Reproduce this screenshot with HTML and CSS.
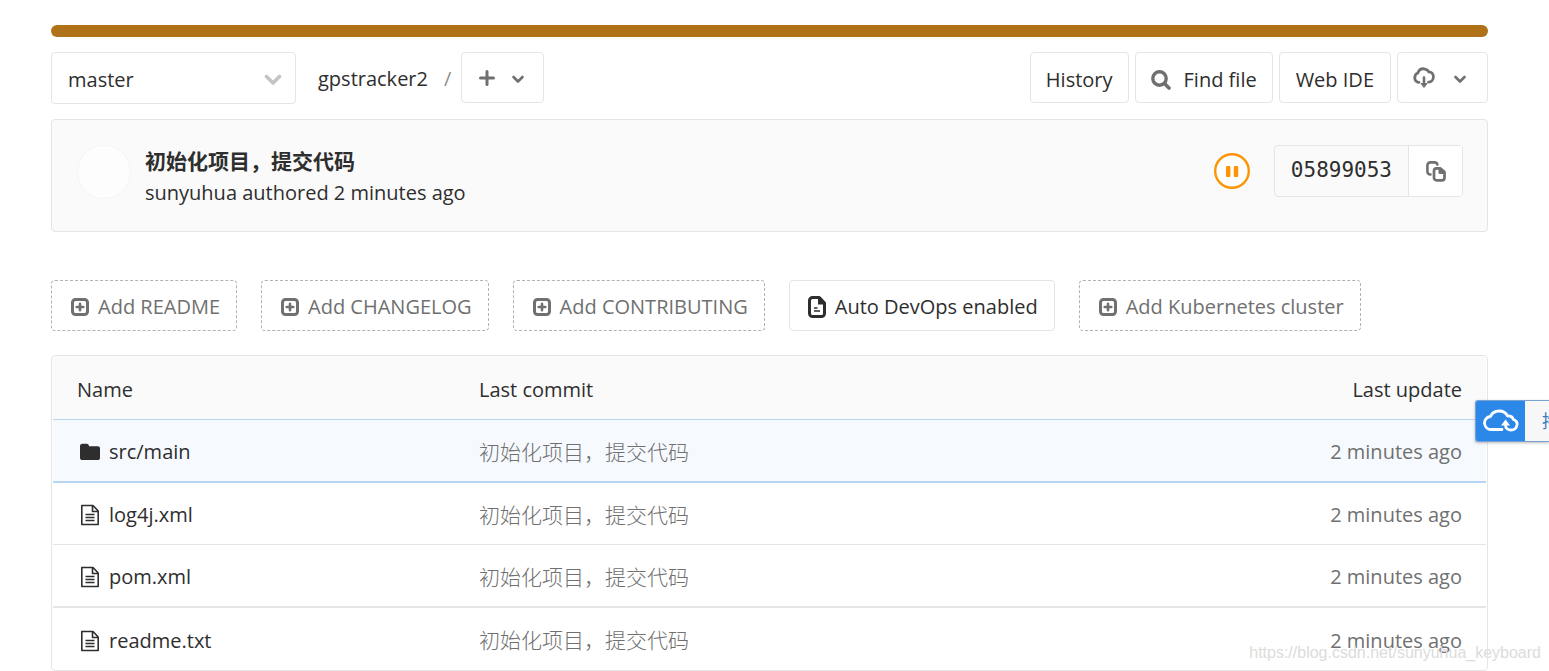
FILE: index.html
```html
<!DOCTYPE html>
<html lang="en">
<head>
<meta charset="utf-8">
<meta name="viewport" content="width=device-width, initial-scale=1">
<title>gpstracker2</title>
<link rel="stylesheet" href="styles.css">
</head>
<body>
<svg class="sprite" aria-hidden="true">
  <symbol id="chevron" viewBox="0 0 16 16"><path d="M3.500 7 8 11.500 12.500 7" fill="none" stroke="currentColor" stroke-width="2.600" stroke-linecap="round" stroke-linejoin="round"/></symbol>
  <symbol id="plus-square" viewBox="0 0 18 18"><rect x="1.500" y="1.500" width="15" height="15" rx="3" fill="none" stroke="currentColor" stroke-width="3"/><path d="M9 5.700v6.600M5.700 9h6.600" stroke="currentColor" stroke-width="2.600" stroke-linecap="round"/></symbol>
  <symbol id="file" viewBox="0 0 20 22"><path d="M1.800 1.500H13L18.200 7v13.500H1.800zM12.500 2v5.500H18" fill="none" stroke="currentColor" stroke-width="1.600" stroke-linejoin="round"/><path d="M5.500 10.500h9M5.500 13.500h9M5.500 16.500h9" stroke="currentColor" stroke-width="1.500"/></symbol>
</svg>
<main class="page">
  <div class="language-bar"></div>
  <nav class="toolbar">
    <div class="branch">
      <select class="branch-select" aria-label="Branch"><option>master</option></select>
      <svg class="branch-chevron" viewBox="0 0 18 12"><path d="M2.500 2.500 9 9l6.500-6.500" fill="none" stroke="currentColor" stroke-width="3.600" stroke-linecap="round" stroke-linejoin="round"/></svg>
    </div>
    <div class="crumbs"><a href="#">gpstracker2</a><span class="slash">/</span></div>
    <button class="btn btn-menu" aria-label="Add to tree">
      <svg class="icon-plus" viewBox="0 0 16 16"><path d="M8 1.500v13M1.500 8h13" stroke="currentColor" stroke-width="3" stroke-linecap="round"/></svg>
      <svg class="chevron"><use href="#chevron"/></svg>
    </button>
    <div class="actions">
      <a class="btn" href="#">History</a>
      <a class="btn btn-find" href="#"><svg class="icon-search" viewBox="0 0 20 20"><circle cx="8.500" cy="8.500" r="6.700" fill="none" stroke="currentColor" stroke-width="3.400"/><path d="m13.500 13.500 4.500 4.500" stroke="currentColor" stroke-width="3.600" stroke-linecap="round"/></svg>Find file</a>
      <a class="btn btn-ide" href="#">Web IDE</a>
      <button class="btn btn-download" aria-label="Download">
        <svg class="icon-cloud" viewBox="0 0 22 22"><path d="M6 15.300C3.300 15.300 1.500 13 1.800 10.300 2 8 3 6.500 4.800 6 5.800 3.200 8.300 1.500 11 1.800c2.200.2 3.900 1.200 4.800 3 2.700.1 4.600 2.200 4.600 4.900 0 3.200-2 5.500-4.900 5.500" fill="none" stroke="currentColor" stroke-width="2.800" stroke-linecap="round"/><path d="M11 10.500V17" stroke="currentColor" stroke-width="2.600" stroke-linecap="round"/><path d="m8 16.500 3 4 3-4z" fill="currentColor" stroke="currentColor" stroke-linejoin="round"/></svg>
        <svg class="chevron"><use href="#chevron"/></svg>
      </button>
    </div>
  </nav>

  <section class="commit">
    <div class="avatar"></div>
    <div class="commit-text">
      <a class="commit-title" href="#" lang="zh-CN">初始化项目，提交代码</a>
      <div>sunyuhua authored 2 minutes ago</div>
    </div>
    <svg class="status" viewBox="0 0 36 36" role="img" aria-label="Pipeline pending"><circle cx="18" cy="18" r="16.800" fill="#fff" stroke="#fc9403" stroke-width="2.400"/><rect x="12" y="13" width="4.400" height="11" rx="1" fill="#fc9403"/><rect x="19.800" y="13" width="4.400" height="11" rx="1" fill="#fc9403"/></svg>
    <div class="sha">
      <span class="sha-value">05899053</span>
      <button class="sha-copy" aria-label="Copy commit SHA"><svg viewBox="0 0 20 21"><path d="M4.500 13.500C2.500 13.500 1.400 12.300 1.400 10.500v-6C1.400 2.600 2.600 1.400 4.500 1.400h3.700c1.800 0 2.900.8 3.200 2.200" fill="none" stroke="currentColor" stroke-width="2.600" stroke-linecap="round"/><path d="M10.600 7.300h3.600L18.500 11v5.700a2.600 2.600 0 0 1-2.600 2.600h-5.300A2.600 2.600 0 0 1 8 16.700V9.900a2.600 2.600 0 0 1 2.600-2.600z" fill="none" stroke="currentColor" stroke-width="2.700" stroke-linejoin="round"/><path d="M12.500 7v4.500a1.500 1.500 0 0 0 1.500 1.500h5v-2.500L15 7z" fill="currentColor"/></svg></button>
    </div>
  </section>

  <div class="suggestions">
    <a class="btn btn-missing" href="#"><svg class="icon-box"><use href="#plus-square"/></svg>Add README</a>
    <a class="btn btn-missing" href="#"><svg class="icon-box"><use href="#plus-square"/></svg>Add CHANGELOG</a>
    <a class="btn btn-missing" href="#"><svg class="icon-box"><use href="#plus-square"/></svg>Add CONTRIBUTING</a>
    <a class="btn btn-enabled" href="#"><svg class="icon-doc" viewBox="0 0 18 22"><path d="M4.500 1.500h6.800L16.500 7v10.500a3 3 0 0 1-3 3h-9a3 3 0 0 1-3-3v-13a3 3 0 0 1 3-3z" fill="none" stroke="currentColor" stroke-width="3" stroke-linejoin="round"/><path d="M10 2v6.500h6.500L11.500 2z" fill="currentColor"/><path d="M6 12h3.500M6 15h6" stroke="currentColor" stroke-width="1.600"/></svg>Auto DevOps enabled</a>
    <a class="btn btn-missing" href="#"><svg class="icon-box"><use href="#plus-square"/></svg>Add Kubernetes cluster</a>
  </div>

  <div class="tree">
    <table>
      <thead><tr><th class="col-name">Name</th><th>Last commit</th><th class="col-time">Last update</th></tr></thead>
      <tbody>
        <tr class="active"><td><a href="#"><svg class="icon-file" viewBox="0 0 20 22"><path d="M0 5.200C0 3.600.9 2.700 2.300 2.700h4.400c1.400 0 2.300.9 2.300 2.500h8.800c1.300 0 2.200.8 2.200 2.200v9.400c0 1.400-.9 2.300-2.300 2.300H2.300C.9 19.100 0 18.200 0 16.800z" fill="currentColor"/></svg>src/main</a></td><td class="muted message" lang="zh-CN">初始化项目，提交代码</td><td class="muted col-time">2 minutes ago</td></tr>
        <tr><td><a href="#"><svg class="icon-file"><use href="#file"/></svg>log4j.xml</a></td><td class="muted message" lang="zh-CN">初始化项目，提交代码</td><td class="muted col-time">2 minutes ago</td></tr>
        <tr class="thick"><td><a href="#"><svg class="icon-file"><use href="#file"/></svg>pom.xml</a></td><td class="muted message" lang="zh-CN">初始化项目，提交代码</td><td class="muted col-time">2 minutes ago</td></tr>
        <tr><td><a href="#"><svg class="icon-file"><use href="#file"/></svg>readme.txt</a></td><td class="muted message" lang="zh-CN">初始化项目，提交代码</td><td class="muted col-time">2 minutes ago</td></tr>
      </tbody>
    </table>
  </div>
</main>
<aside class="upload">
  <div class="upload-icon"><svg viewBox="0 0 36 24"><path d="M19 20.500H8.500a6.500 6.500 0 0 1-1-13C9 4 12 2 16 2s7 1.800 8.500 5c3-.3 5 1 6 3.500 2.500 1 4 3 3.500 5.500-.6 3.200-3 5-6 5-3.200 0-5.500-1.800-5.500-4.800V14" fill="none" stroke="#fff" stroke-width="2.800" stroke-linecap="round" stroke-linejoin="round"/><path d="m18 16.500 4.600-6 4.400 6z" fill="#fff"/></svg></div>
  <span class="upload-label" lang="zh-CN">拖</span>
</aside>
<div class="watermark">https://blog.csdn.net/sunyuhua_keyboard</div>
</body>
</html>
```
FILE: styles.css
```css
* { box-sizing: border-box; }
body {
  margin: 0;
  height: 100vh;
  overflow: hidden;
  position: relative;
  background: #fff;
  color: #2e2e2e;
  font: 20px/30px "Open Sans", "Noto Sans CJK SC", sans-serif;
}
a { color: inherit; text-decoration: none; }
button, select { font: inherit; color: inherit; margin: 0; }
svg { display: block; flex: none; }
.sprite { position: absolute; width: 0; height: 0; }
.page { padding: 25px 61px 0 51px; }
.language-bar { height: 12px; border-radius: 6px; background: #b07219; }

.toolbar { display: flex; align-items: flex-start; margin-top: 15px; }
.branch { position: relative; width: 245px; }
.branch-select {
  display: block;
  width: 100%;
  height: 52px;
  padding: 4px 16px 0;
  border: 1px solid #e5e5e5;
  border-radius: 4px;
  background: #fff;
  appearance: none;
}
.branch-chevron { position: absolute; right: 14px; top: 22px; width: 18px; height: 12px; color: #c4c4c4; pointer-events: none; }
.crumbs { display: flex; gap: 16px; padding: 12px 10px 0 22px; }
.slash { color: #8f8f8f; }
.btn {
  display: inline-flex;
  align-items: center;
  height: 51px;
  padding: 4px 15px 0;
  border: 1px solid #e5e5e5;
  border-radius: 4px;
  background: #fff;
  white-space: nowrap;
}
.btn svg { color: #707070; }
.btn-menu { gap: 15px; padding: 0 17px; }
.icon-plus { width: 16px; height: 16px; }
.chevron { width: 16px; height: 16px; }
.actions { display: flex; gap: 6px; margin-left: auto; }
.btn-find { gap: 13px; }
.btn-ide { padding-left: 16px; padding-right: 16px; }
.icon-search { width: 20px; height: 20px; }
.btn-download { gap: 17px; padding: 0 19px 0 15px; }
.icon-cloud { width: 22px; height: 22px; }

.commit {
  display: flex;
  align-items: flex-start;
  margin-top: 15px;
  padding: 25px 24px 23px 25px;
  border: 1px solid #e5e5e5;
  border-radius: 4px;
  background: #fafafa;
}
.avatar { width: 54px; height: 54px; border: 1px solid #f5f5f5; border-radius: 50%; background: #fdfdfd; }
.commit-text { display: grid; gap: 3px; margin-left: 14px; }
.commit-title { font-size: 21px; font-weight: 700; }
.status { width: 36px; height: 36px; margin: 8px 24px 0 auto; }
.sha { display: flex; height: 52px; border: 1px solid #e5e5e5; border-radius: 4px; overflow: hidden; }
.sha-value { padding: 9px 16px; font-family: "DejaVu Sans Mono", monospace; font-size: 21px; }
.sha-copy { display: grid; place-items: center; width: 54px; padding: 0; border: 0; border-left: 1px solid #e5e5e5; background: #fff; color: #707070; }
.sha-copy svg { width: 20px; height: 21px; }

.suggestions { display: flex; gap: 24px; margin-top: 48px; }
.suggestions .btn { gap: 9px; padding-top: 3px; padding-right: 16px; }
.suggestions .btn-missing { padding-left: 19px; border: 1px dashed #b2b2b2; color: #707070; }
.icon-box { width: 18px; height: 18px; }
.suggestions .btn-enabled { padding-left: 18px; }
.btn .icon-doc { width: 18px; height: 22px; color: #2e2e2e; }

.tree { margin-top: 24px; padding: 0 1px; border: 1px solid #e5e5e5; border-radius: 4px; overflow: hidden; }
table { width: 100%; table-layout: fixed; border-collapse: separate; border-spacing: 0; }
th, td { padding: 3px 24px 0; text-align: left; font-weight: 400; }
th { height: 64px; padding-top: 4px; background: #fafafa; border-bottom: 1px solid #b8d6f4; }
td { height: 62px; border-bottom: 1px solid #e5e5e5; }
td a { display: flex; align-items: center; gap: 9px; padding-left: 3px; }
.col-name { width: 402px; }
.col-time { text-align: right; }
.muted { color: #707070; }
[lang="zh-CN"] { font-family: "Noto Sans CJK SC", sans-serif; font-size: 21px; }
.message { padding-top: 0; font-weight: 300; }
.active td { height: 63px; background: #f6fafe; border-bottom: 2px solid #b8d6f4; }
.thick td { height: 63px; border-bottom-width: 2px; }
tr:last-child td { border-bottom: 0; }
.icon-file { width: 20px; height: 22px; }

.upload {
  position: absolute;
  top: 400px;
  right: 0;
  display: flex;
  width: 74px;
  height: 42px;
  overflow: hidden;
  border: 1px solid #78a2d2;
  border-right: 0;
  border-radius: 3px 0 0 3px;
  background: #f7f7f7;
  box-shadow: 0 1px 3px #0004;
}
.upload-icon { display: grid; place-items: center; flex: none; width: 49px; background: #2b87e8; }
.upload-icon svg { width: 36px; height: 24px; }
.upload .upload-label { padding: 4px 0 0 17px; color: #3c7cc0; font-size: 18px; white-space: nowrap; }
.watermark { position: absolute; right: 8px; bottom: 3px; color: #dcdcdc; font: 16px/30px "Liberation Sans", sans-serif; }
```
